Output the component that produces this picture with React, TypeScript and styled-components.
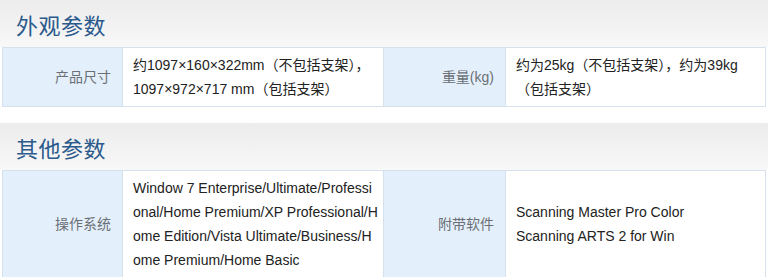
import styled, { createGlobalStyle } from "styled-components";

const GlobalStyle = createGlobalStyle`
  html, body {
    margin: 0;
    padding: 0;
    background: #ffffff;
  }
  body {
    font-family: "Liberation Sans", Arial, "Noto Sans CJK SC", sans-serif;
    font-size: 14px;
    color: #222222;
  }
`;

const Page = styled.div`
  width: 768px;
  display: flex;
  flex-direction: column;
`;

const Section = styled.section`
  display: flex;
  flex-direction: column;
  margin-bottom: 16px;
`;

const SectionHead = styled.div`
  height: 47px;
  display: flex;
  align-items: center;
  padding-left: 16px;
  background: linear-gradient(to bottom, #ececec 0%, #f3f3f3 60%, #f8f8f8 100%);
`;

const SectionTitle = styled.h2`
  margin: 0;
  font-family: "Noto Sans CJK SC", "Liberation Sans", sans-serif;
  font-weight: 400;
  font-size: 22px;
  color: #2b5a8c;
  letter-spacing: 0.5px;
`;

const Table = styled.div`
  margin: 0 2px;
  display: grid;
  grid-template-columns: 120px 261px 122px 1fr;
  border-top: 1px solid #d5e2ee;
  border-left: 1px solid #d5e2ee;
`;

const Label = styled.div`
  display: flex;
  align-items: center;
  justify-content: flex-end;
  padding: 5px 11px 5px 8px;
  background: #e4effc;
  color: #6b6f75;
  border-right: 1px solid #d5e2ee;
  border-bottom: 1px solid #d5e2ee;
  line-height: 24px;
`;

const Value = styled.div<{ $breakAll?: boolean }>`
  display: flex;
  flex-direction: column;
  justify-content: center;
  padding: 5px 4px 5px 10px;
  background: #ffffff;
  border-right: 1px solid #d5e2ee;
  border-bottom: 1px solid #d5e2ee;
  line-height: 24px;
  word-break: ${(p) => (p.$breakAll ? "break-all" : "normal")};
`;

export default function App() {
  return (
    <Page>
      <GlobalStyle />
      <Section>
        <SectionHead>
          <SectionTitle>外观参数</SectionTitle>
        </SectionHead>
        <Table>
          <Label>产品尺寸</Label>
          <Value>
            <span>约1097×160×322mm（不包括支架），</span>
            <span>1097×972×717 mm（包括支架）</span>
          </Value>
          <Label>重量(kg)</Label>
          <Value>约为25kg（不包括支架），约为39kg（包括支架）</Value>
        </Table>
      </Section>
      <Section>
        <SectionHead>
          <SectionTitle>其他参数</SectionTitle>
        </SectionHead>
        <Table>
          <Label>操作系统</Label>
          <Value $breakAll>
            Window 7 Enterprise/Ultimate/Professional/Home Premium/XP Professional/Home Edition/Vista Ultimate/Business/Home Premium/Home Basic
          </Value>
          <Label>附带软件</Label>
          <Value>
            <span>Scanning Master Pro Color</span>
            <span>Scanning ARTS 2 for Win</span>
          </Value>
        </Table>
      </Section>
    </Page>
  );
}
